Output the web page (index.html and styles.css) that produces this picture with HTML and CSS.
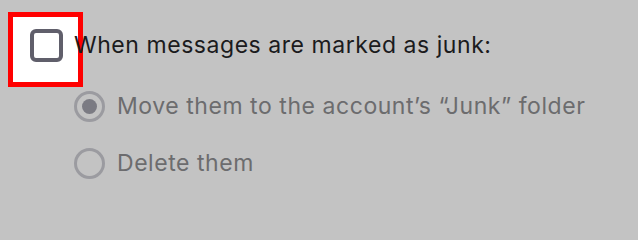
FILE: index.html
```html
<!DOCTYPE html>
<html lang="en">
<head>
<meta charset="utf-8">
<title>Junk settings</title>
<link rel="stylesheet" href="styles.css">
</head>
<body>
<div class="panel">
  <label class="check-row">
    <span class="check-wrap">
      <span class="highlight"></span>
      <span class="checkbox"></span>
    </span>
    <span class="label">When messages are marked as junk:</span>
  </label>
  <div class="radio-group">
    <label class="radio-row">
      <span class="radio checked"><span class="dot"></span></span>
      <span class="label disabled">Move them to the account’s “Junk” folder</span>
    </label>
    <label class="radio-row">
      <span class="radio"></span>
      <span class="label disabled">Delete them</span>
    </label>
  </div>
</div>
</body>
</html>
```
FILE: styles.css
```css
html, body {
  margin: 0;
  padding: 0;
  background: #c3c3c3;
}
body {
  width: 638px;
  height: 212px;
  overflow: hidden;
  font-family: Inter, "Liberation Sans", sans-serif;
  font-size: 23px;
  letter-spacing: 0.55px;
}
.panel {
  display: flex;
  flex-direction: column;
  gap: 29px;
  padding: 29px 0 0 30px;
}
.check-row {
  display: flex;
  align-items: center;
  gap: 11px;
  height: 33px;
}
.check-wrap {
  position: relative;
  width: 33px;
  height: 33px;
  flex: none;
}
.highlight {
  position: absolute;
  left: -22px;
  top: -17px;
  width: 75px;
  height: 75px;
  box-sizing: border-box;
  border: 5px solid #ff0000;
  background: #ffffff;
}
.checkbox {
  position: relative;
  display: block;
  box-sizing: border-box;
  width: 33px;
  height: 33px;
  border: 4px solid #605f6b;
  border-radius: 6px;
  background: #ffffff;
}
.label {
  position: relative;
  color: #1b1b1d;
  line-height: 33px;
}
.label.disabled {
  color: #6c6c6e;
}
.radio-group {
  display: flex;
  flex-direction: column;
  gap: 26px;
  padding-left: 44px;
}
.radio-row {
  display: flex;
  align-items: center;
  gap: 12px;
  height: 31px;
}
.radio {
  box-sizing: border-box;
  width: 31px;
  height: 31px;
  flex: none;
  border: 3.5px solid #9b9ba0;
  border-radius: 50%;
  display: flex;
  align-items: center;
  justify-content: center;
}
.dot {
  width: 15px;
  height: 15px;
  border-radius: 50%;
  background: #7b7b83;
}
```
